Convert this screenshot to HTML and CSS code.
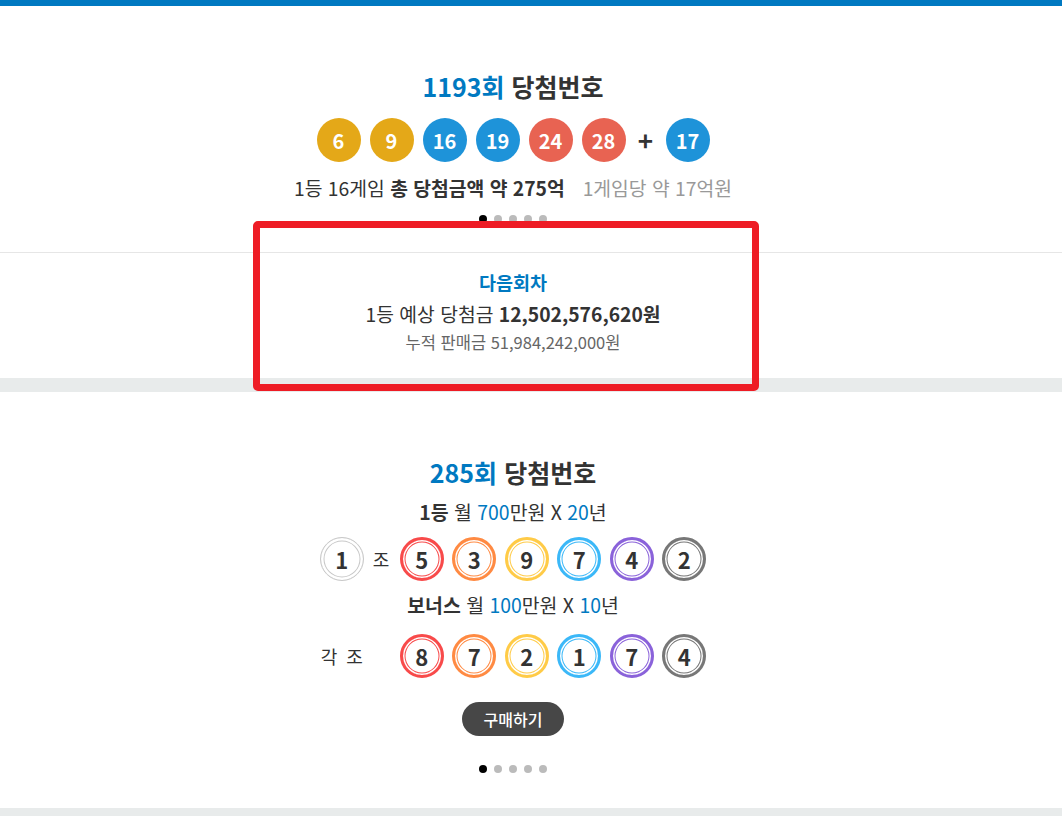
FILE: index.html
```html
<!DOCTYPE html>
<html lang="ko">
<head>
<meta charset="utf-8">
<title>당첨번호</title>
<link rel="stylesheet" href="styles.css">
</head>
<body>
<div class="topbar"></div>

<section class="sec sec-lotto">
  <div class="inner">
    <h2 class="title"><span class="blue">1193회</span> 당첨번호</h2>
    <div class="balls">
      <span class="ball y">6</span>
      <span class="ball y">9</span>
      <span class="ball b">16</span>
      <span class="ball b">19</span>
      <span class="ball r">24</span>
      <span class="ball r">28</span>
      <span class="plus">+</span>
      <span class="ball b">17</span>
    </div>
    <p class="prize">1등 16게임 <strong>총 당첨금액 약 275억</strong><span class="per">1게임당 약 17억원</span></p>
    <div class="dots"><i class="on"></i><i></i><i></i><i></i><i></i></div>
  </div>
</section>

<section class="sec sec-next">
  <div class="inner">
    <p class="next-label">다음회차</p>
    <p class="next-prize">1등 예상 당첨금 <strong>12,502,576,620원</strong></p>
    <p class="next-sales">누적 판매금 51,984,242,000원</p>
  </div>
</section>

<div class="band"></div>

<section class="sec sec-pension">
  <div class="inner">
    <h2 class="title"><span class="blue">285회</span> 당첨번호</h2>
    <p class="rank"><strong>1등</strong> 월 <span class="blue2">700</span>만원 X <span class="blue2">20</span>년</p>
    <div class="ring-row">
      <div class="label"><span class="rball gray">1</span><span class="jo">조</span></div>
      <div class="rballs">
        <span class="rball c1">5</span>
        <span class="rball c2">3</span>
        <span class="rball c3">9</span>
        <span class="rball c4">7</span>
        <span class="rball c5">4</span>
        <span class="rball c6">2</span>
      </div>
    </div>
    <p class="rank rank2"><strong>보너스</strong> 월 <span class="blue2">100</span>만원 X <span class="blue2">10</span>년</p>
    <div class="ring-row ring-row2">
      <div class="label"><span class="each">각 조</span></div>
      <div class="rballs">
        <span class="rball c1">8</span>
        <span class="rball c2">7</span>
        <span class="rball c3">2</span>
        <span class="rball c4">1</span>
        <span class="rball c5">7</span>
        <span class="rball c6">4</span>
      </div>
    </div>
    <a class="buy" href="#">구매하기</a>
    <div class="dots dots2"><i class="on"></i><i></i><i></i><i></i><i></i></div>
  </div>
</section>

<div class="band band-bottom"></div>

<div class="highlight"></div>
</body>
</html>
```

FILE: styles.css
```css
* { box-sizing: border-box; }
html, body { margin: 0; padding: 0; }
body {
  font-family: "Noto Sans CJK KR", "Noto Sans", sans-serif;
  color: #333;
  background: #fff;
  position: relative;
  width: 1062px;
  height: 816px;
  overflow: hidden;
}
p, h2 { margin: 0; }

.topbar { height: 6px; background: #0079c1; }

.inner {
  padding-right: 36px;
  display: flex;
  flex-direction: column;
  align-items: center;
}

.title {
  font-size: 25px;
  line-height: 32px;
  font-weight: 700;
  color: #333;
}
.blue { color: #0079c1; }
.blue2 { color: #0079c1; }

.sec-lotto { padding-top: 64px; padding-bottom: 29px; border-bottom: 1px solid #e6e6e6; }

.balls {
  margin-top: 16px;
  display: flex;
  align-items: center;
  gap: 9px;
}
.ball {
  width: 44px;
  height: 44px;
  border-radius: 50%;
  color: #fff;
  font-weight: 700;
  font-size: 20px;
  display: flex;
  align-items: center;
  justify-content: center;
}
.ball.y { background: #e4a818; }
.ball.b { background: #1e93d9; }
.ball.r { background: #e86352; }
.plus {
  width: 22px;
  text-align: center;
  font-size: 26px;
  font-weight: 700;
  color: #333;
  line-height: 44px;
}

.prize {
  margin-top: 13px;
  font-size: 19.3px;
  line-height: 26px;
  color: #333;
}
.prize strong { font-weight: 700; }
.prize .per { color: #999; margin-left: 18px; }

.dots {
  margin-top: 14px;
  display: flex;
  gap: 7px;
  height: 8px;
}
.dots i {
  width: 8px;
  height: 8px;
  border-radius: 50%;
  background: #bbb;
}
.dots i.on { background: #000; }

.sec-next { padding-top: 17px; padding-bottom: 25px; }
.next-label {
  font-size: 18.5px;
  line-height: 24px;
  font-weight: 700;
  color: #0079c1;
}
.next-prize {
  margin-top: 7px;
  font-size: 19.3px;
  line-height: 26px;
  color: #333;
}
.next-prize strong { font-weight: 700; }
.next-sales {
  margin-top: 4px;
  font-size: 16.5px;
  line-height: 22px;
  color: #666;
}

.band { height: 14px; background: #e8ebeb; }
.band-bottom { height: 8px; }

.sec-pension { padding-top: 64px; padding-bottom: 35px; }
.rank {
  margin-top: 11px;
  font-size: 19.4px;
  line-height: 26px;
  color: #333;
}
.rank strong { font-weight: 700; }

.ring-row {
  margin-top: 12px;
  display: flex;
  align-items: center;
}
.ring-row2 { margin-top: 16px; }
.label {
  width: 80px;
  display: flex;
  align-items: center;
}
.jo { margin-left: 9px; font-size: 18px; color: #333; }
.each { margin-left: 1px; font-size: 18px; color: #333; letter-spacing: 2px; }

.rballs { display: flex; gap: 8.5px; }
.rball {
  --c: #ccc;
  width: 44px;
  height: 44px;
  border-radius: 50%;
  border: 3px solid var(--c);
  box-shadow: inset 0 0 0 1.5px #fff, inset 0 0 0 2.5px var(--c);
  display: flex;
  align-items: center;
  justify-content: center;
  font-size: 22px;
  font-weight: 700;
  color: #333;
}
.rball.gray {
  --c: #c8c8c8;
  border-width: 1px;
  box-shadow: inset 0 0 0 2.5px #fff, inset 0 0 0 3.5px var(--c);
}
.rball.c1 { --c: #f84a4a; }
.rball.c2 { --c: #ff8a42; }
.rball.c3 { --c: #ffcb47; }
.rball.c4 { --c: #3bb8f8; }
.rball.c5 { --c: #8a62da; }
.rball.c6 { --c: #777; }

.buy {
  margin-top: 24px;
  height: 34px;
  width: 102px;
  border-radius: 17px;
  background: #474747;
  color: #fff;
  font-size: 16px;
  font-weight: 500;
  text-decoration: none;
  display: flex;
  align-items: center;
  justify-content: center;
}
.dots2 { margin-top: 29px; }

.highlight {
  position: absolute;
  left: 253px;
  top: 221px;
  width: 506px;
  height: 170px;
  border: 7px solid #ee1c25;
  border-radius: 5px;
  pointer-events: none;
}
```
